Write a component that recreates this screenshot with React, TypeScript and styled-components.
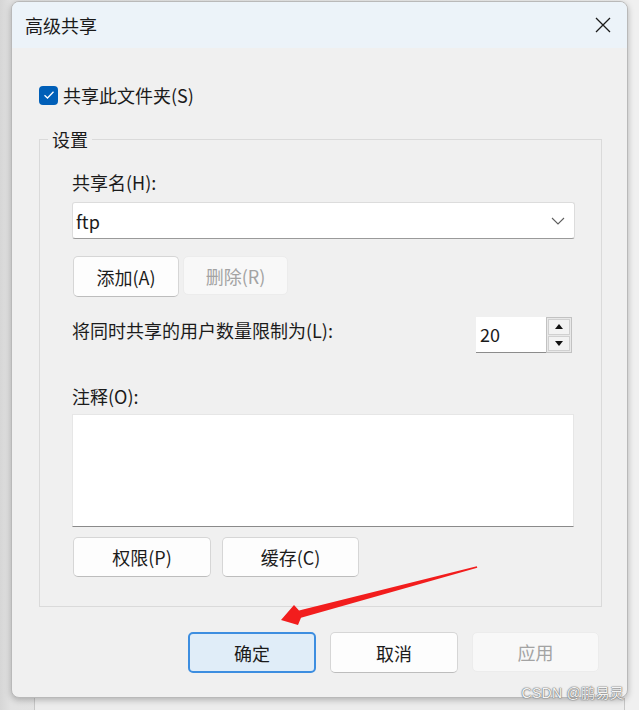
import React from "react";
import styled, { createGlobalStyle } from "styled-components";

const Global = createGlobalStyle`
  html, body { margin: 0; padding: 0; }
  body {
    background: #e6e6e6;
    font-family: "Noto Sans CJK SC", "Noto Sans", sans-serif;
    color: #1b1b1b;
  }
  * { box-sizing: border-box; }
`;

const Screen = styled.div`
  position: relative;
  width: 639px;
  height: 710px;
  overflow: hidden;
  padding: 1px 0 0 11px;
  background: linear-gradient(90deg, #d6d6d6 0px, #e2e2e2 11px, #f0f0f0 628px);
`;

const Window = styled.div`
  position: relative;
  width: 617px;
  height: 697px;
  border-radius: 8px;
  background: #f0f0f0;
  border: 1px solid #b9b9b9;
  box-shadow: 0 2px 6px rgba(0, 0, 0, 0.25);
  display: flex;
  flex-direction: column;
  overflow: hidden;
`;

const BackWindow = styled.div`
  margin-left: 23px;
  width: 591px;
  height: 14px;
  background: #ececec;
  border: 1px solid #c6c6c6;
  border-top: none;
`;

const TitleBar = styled.div`
  height: 46px;
  flex: none;
  display: flex;
  align-items: center;
  justify-content: space-between;
  padding: 0 16px 0 13px;
  background: #ecf3f9;
`;

const Title = styled.span`
  font-size: 18px;
  line-height: 24px;
  color: #1a1a1a;
`;

const Close = styled.span`
  display: flex;
  width: 16px;
  height: 16px;
`;

const Body = styled.div`
  flex: 1;
  display: flex;
  flex-direction: column;
  padding: 36px 25px 0 27px;
`;

const CheckRow = styled.label`
  display: flex;
  align-items: center;
  gap: 5px;
  height: 22px;
  font-size: 18px;
  line-height: 22px;
`;

const CheckBox = styled.span`
  width: 19px;
  height: 19px;
  border-radius: 4px;
  background: #005fb8;
  display: flex;
  align-items: center;
  justify-content: center;
`;

const Group = styled.fieldset`
  margin: 22px 0 0 0;
  padding: 0;
  border: 1px solid #dadada;
  min-width: 0;
`;

const Legend = styled.legend`
  margin-left: 8px;
  padding: 0 4px;
  font-size: 18px;
  line-height: 22px;
`;

const GroupInner = styled.div`
  display: flex;
  flex-direction: column;
  padding: 20px 26px 29px 32px;
`;

const Label = styled.div<{ $mt?: number }>`
  font-size: 18px;
  line-height: 24px;
  margin-top: ${(p) => p.$mt ?? 0}px;
`;

const Combo = styled.div`
  margin-top: 8px;
  height: 37px;
  background: #ffffff;
  border: 1px solid #dcdcdc;
  border-bottom-color: #9a9a9a;
  border-radius: 3px;
  display: flex;
  align-items: center;
  justify-content: space-between;
  padding: 0 9px 0 3px;
  font-size: 18px;
`;

const ButtonRow = styled.div<{ $mt: number; $gap: number }>`
  display: flex;
  gap: ${(p) => p.$gap}px;
  margin-top: ${(p) => p.$mt}px;
  padding-left: 1px;
`;

const Button = styled.button<{ $w: number; $h?: number; $variant?: "normal" | "disabled" | "primary" }>`
  width: ${(p) => p.$w}px;
  height: ${(p) => p.$h ?? 41}px;
  font-family: inherit;
  font-size: 18px;
  border-radius: 5px;
  cursor: default;
  padding: 0;
  ${(p) =>
    p.$variant === "disabled"
      ? `
    background: #f8f8f8;
    border: 1px solid #ececec;
    color: #a3a3a3;
  `
      : p.$variant === "primary"
      ? `
    background: #e0edf8;
    border: 2px solid #3d8ee0;
    color: #1b1b1b;
  `
      : `
    background: #fdfdfd;
    border: 1px solid #d6d6d6;
    border-bottom-color: #bdbdbd;
    color: #1b1b1b;
  `}
`;

const LimitRow = styled.div`
  margin-top: 20px;
  display: flex;
  justify-content: space-between;
  align-items: flex-start;
  padding-right: 3px;
`;

const LimitLabel = styled.span`
  font-size: 18px;
  line-height: 26px;
`;

const Spin = styled.div`
  display: flex;
  height: 36px;
`;

const SpinInput = styled.div`
  width: 70px;
  background: #ffffff;
  border-bottom: 1px solid #8c8c8c;
  font-size: 18px;
  line-height: 34px;
  padding-left: 4px;
`;

const SpinButtons = styled.div`
  width: 26px;
  border: 1px solid #c2c2c2;
  background: #e8e8e8;
  display: flex;
  flex-direction: column;
  gap: 1px;
  padding: 1px;
`;

const SpinBtn = styled.div`
  flex: 1;
  background: #f2f2f2;
  border: 1px solid #d0d0d0;
  display: flex;
  align-items: center;
  justify-content: center;
`;

const TextArea = styled.div`
  margin-top: 6px;
  margin-right: 1px;
  height: 113px;
  background: #ffffff;
  border: 1px solid #e6e6e6;
  border-bottom: 1px solid #8a8a8a;
`;

const Footer = styled.div`
  display: flex;
  justify-content: flex-end;
  gap: 14px;
  margin-top: 25px;
  padding-right: 3px;
`;

const Watermark = styled.div`
  position: absolute;
  right: 15px;
  bottom: 8px;
  font-family: "Liberation Sans", "Noto Sans CJK SC", sans-serif;
  font-size: 14px;
  line-height: 18px;
  color: #f4f4f4;
  text-shadow: 0 0 1px #6f6f6f, 0 0 1px #6f6f6f, 0 0 2px #8a8a8a;
  letter-spacing: 0.3px;
`;

const ArrowOverlay = styled.svg`
  position: absolute;
  left: 0;
  top: 0;
  width: 639px;
  height: 710px;
  pointer-events: none;
`;

export default function App() {
  return (
    <>
      <Global />
      <Screen>
        <Window>
          <TitleBar>
            <Title>高级共享</Title>
            <Close>
              <svg width="16" height="16" viewBox="0 0 16 16">
                <path d="M1 1 L15 15 M15 1 L1 15" stroke="#1a1a1a" strokeWidth="1.3" />
              </svg>
            </Close>
          </TitleBar>
          <Body>
            <CheckRow>
              <CheckBox>
                <svg width="12" height="10" viewBox="0 0 12 10">
                  <path d="M1.5 5.2 L4.5 8 L10.5 1.8" stroke="#ffffff" strokeWidth="1.3" fill="none" />
                </svg>
              </CheckBox>
              共享此文件夹(S)
            </CheckRow>
            <Group>
              <Legend>设置</Legend>
              <GroupInner>
                <Label>共享名(H):</Label>
                <Combo>
                  <span>ftp</span>
                  <svg width="14" height="8" viewBox="0 0 14 8">
                    <path d="M1 1 L7 7 L13 1" stroke="#5f5f5f" strokeWidth="1.1" fill="none" />
                  </svg>
                </Combo>
                <ButtonRow $mt={17} $gap={4}>
                  <Button $w={106}>添加(A)</Button>
                  <Button $w={105} $h={39} $variant="disabled">删除(R)</Button>
                </ButtonRow>
                <LimitRow>
                  <LimitLabel>将同时共享的用户数量限制为(L):</LimitLabel>
                  <Spin>
                    <SpinInput>20</SpinInput>
                    <SpinButtons>
                      <SpinBtn>
                        <svg width="8" height="5" viewBox="0 0 8 5">
                          <path d="M0 5 L4 0 L8 5 Z" fill="#111" />
                        </svg>
                      </SpinBtn>
                      <SpinBtn>
                        <svg width="8" height="5" viewBox="0 0 8 5">
                          <path d="M0 0 L8 0 L4 5 Z" fill="#111" />
                        </svg>
                      </SpinBtn>
                    </SpinButtons>
                  </Spin>
                </LimitRow>
                <Label $mt={31}>注释(O):</Label>
                <TextArea />
                <ButtonRow $mt={10} $gap={11}>
                  <Button $w={138} $h={40}>权限(P)</Button>
                  <Button $w={137} $h={40}>缓存(C)</Button>
                </ButtonRow>
              </GroupInner>
            </Group>
            <Footer>
              <Button $w={128} $variant="primary">确定</Button>
              <Button $w={128}>取消</Button>
              <Button $w={127} $h={40} $variant="disabled">应用</Button>
            </Footer>
          </Body>
        </Window>
        <BackWindow />
        <Watermark>CSDN @鹏易灵</Watermark>
        <ArrowOverlay viewBox="0 0 639 710">
          <polygon
            points="281,620 294,605 299,610.6 476.8,566.2 477.3,567.8 301,617.8 298,625"
            fill="#f21d1d"
          />
        </ArrowOverlay>
      </Screen>
    </>
  );
}
